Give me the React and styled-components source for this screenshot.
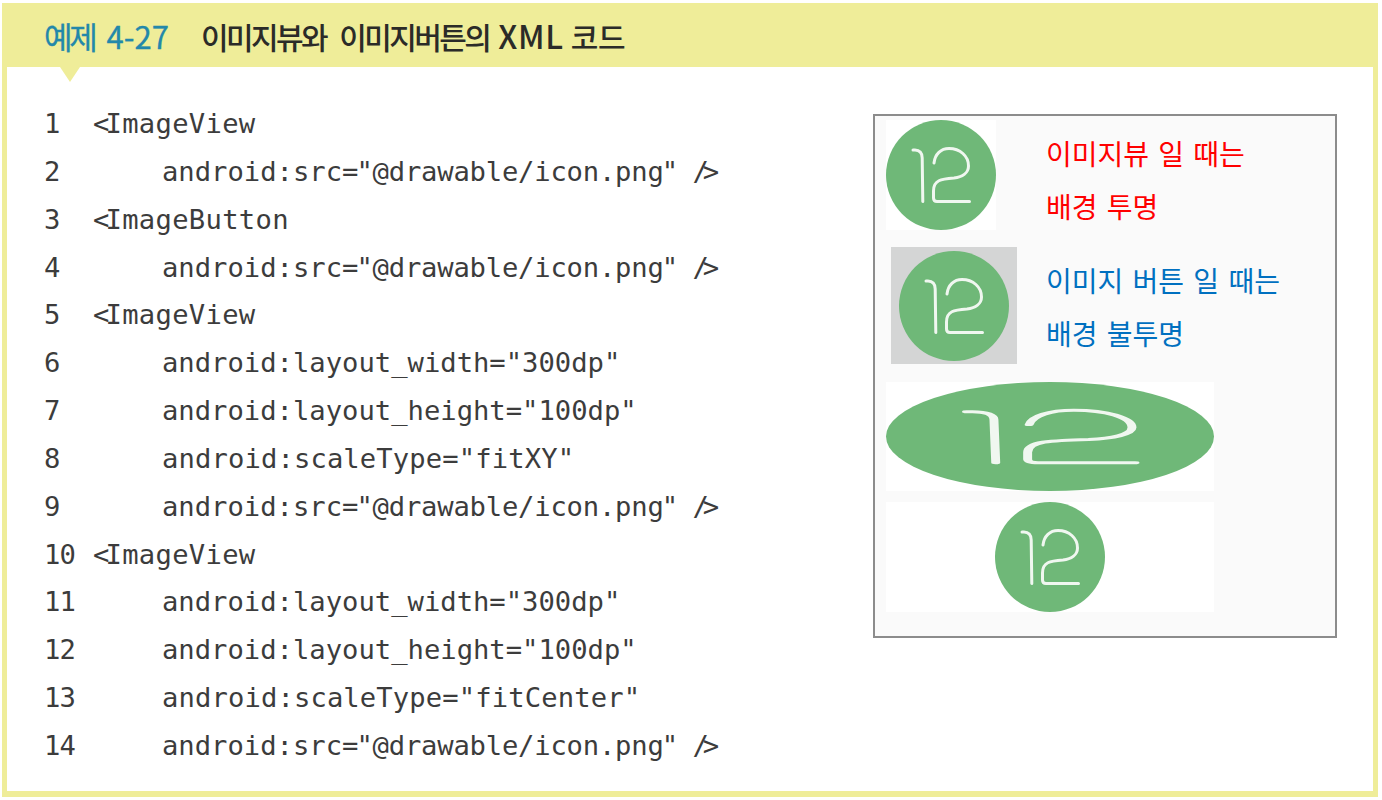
import React from 'react';
import styled, { createGlobalStyle } from 'styled-components';

const GlobalStyle = createGlobalStyle`
  html, body {
    margin: 0;
    padding: 0;
    background: #ffffff;
  }
`;

const Page = styled.div`
  width: 1382px;
  height: 800px;
  padding: 3px 4px 3px 2px;
  box-sizing: border-box;
  overflow: hidden;
`;

const Frame = styled.div`
  height: 100%;
  box-sizing: border-box;
  border: 5px solid #efed99;
  border-top: none;
  border-bottom-width: 6px;
  display: flex;
  flex-direction: column;
`;

const Header = styled.div`
  position: relative;
  height: 64px;
  flex: none;
  margin: 0 -5px;
  padding-left: 42px;
  display: flex;
  align-items: center;
  background: #efed99;

  &::after {
    content: '';
    position: absolute;
    left: 58px;
    top: 64px;
    border-left: 10px solid transparent;
    border-right: 10px solid transparent;
    border-top: 15px solid #efed99;
  }
`;

const ExampleNo = styled.span`
  width: 157px;
  font: 400 31px/1 'Noto Sans CJK KR', sans-serif;
  color: #2388aa;
  -webkit-text-stroke: 0.3px #2388aa;
`;

const ExampleWord = styled.span`
  letter-spacing: -3.2px;
  margin-right: 5px;
`;

const Title = styled.span`
  font: 500 30px/1 'Noto Sans CJK KR', sans-serif;
  letter-spacing: -2.6px;
  word-spacing: 9px;
  color: #2b2b28;
`;

const TitleLatin = styled.span`
  margin: 0 -6px 0 -4px;
  font-size: 32px;
  letter-spacing: 0.6px;
`;

const TitleTail = styled.span`
  letter-spacing: -0.4px;
`;

const Body = styled.div`
  flex: 1;
  display: flex;
  justify-content: space-between;
  padding: 33px 36px 0 37px;
`;

const CodeList = styled.ol`
  list-style: none;
  margin: 0;
  padding: 0;
  font: 400 27.2px/47.85px 'DejaVu Sans Mono', monospace;
  color: #3c3c3c;
`;

const CodeLine = styled.li`
  display: flex;
  white-space: pre;
`;

const LineNo = styled.span`
  width: 49px;
  flex: none;
  letter-spacing: -0.8px;
`;

const Code = styled.span`
  padding-left: ${(p) => (p.$indent ? '69px' : '0')};
  letter-spacing: ${(p) => p.$track || 0}px;
`;

const OpenBracket = styled.span`
  letter-spacing: -3.9px;
`;

const SrcValue = styled.span`
  margin-left: -2px;
  margin-right: -2px;
  letter-spacing: -0.2px;
`;

const CloseTag = styled.span`
  margin-left: 4px;
  letter-spacing: -6px;
`;

const Preview = styled.div`
  width: 464px;
  height: 524px;
  flex: none;
  margin-top: 14px;
  box-sizing: border-box;
  border: 2px solid #8c8c8c;
  background: #fafafa;
  padding: 4px 0 0 11px;
  display: flex;
  flex-direction: column;
`;

const DemoRow = styled.div`
  display: flex;
  align-items: flex-start;
`;

const FirstRow = styled(DemoRow)`
  height: 127px;
`;

const SecondRow = styled(DemoRow)`
  height: 135px;
  padding-left: 5px;
`;

const IconBox = styled.div`
  width: ${(p) => p.$w}px;
  height: ${(p) => p.$h}px;
  flex: none;
  display: flex;
  align-items: center;
  justify-content: center;
  background: ${(p) => p.$bg};
`;

const Stack = styled.div`
  display: flex;
  flex-direction: column;
  gap: 11px;
`;

const NoteBlock = styled.div`
  font: 400 28px/53px 'Noto Sans CJK KR', sans-serif;
  word-spacing: 3px;
  color: ${(p) => p.$color};
  margin-left: ${(p) => p.$left}px;
  margin-top: ${(p) => p.$top}px;
`;

const Android12 = ({ width = 110, height = 110 }) => (
  <svg width={width} height={height} viewBox="0 0 110 110" preserveAspectRatio="none">
    <circle cx="55" cy="55" r="55" fill="#6fb878" />
    <g fill="none" stroke="#f0f7f0" strokeWidth="3" strokeLinecap="round" strokeLinejoin="round">
      <path d="M27 30 H29 C33.5 30 36.2 33 36.2 38 L36.8 81.5" />
      <path d="M48 43 C49 34 55 28.5 63 28.5 C74 28.5 82.5 36 82.5 46 C82.5 53 76 57 68 58 C55 59 47.5 60 47.5 71 L47.5 78 Q47.5 81.5 51 81.5 L83.5 81.5" />
    </g>
  </svg>
);

const WIDTH = 'android:layout_width="300dp"';
const HEIGHT = 'android:layout_height="100dp"';

const lines = [
  { tag: 'ImageView' },
  { src: true },
  { tag: 'ImageButton' },
  { src: true },
  { tag: 'ImageView' },
  { attr: WIDTH },
  { attr: HEIGHT },
  { attr: 'android:scaleType="fitXY"', track: 0.12 },
  { src: true },
  { tag: 'ImageView' },
  { attr: WIDTH },
  { attr: HEIGHT },
  { attr: 'android:scaleType="fitCenter"', track: 0.12 },
  { src: true },
];

const renderCode = (line) => {
  if (line.tag) {
    return (
      <Code $track={0.3}>
        <OpenBracket>{'<'}</OpenBracket>
        {line.tag}
      </Code>
    );
  }
  if (line.src) {
    return (
      <Code $indent>
        android:src=
        <SrcValue>"@drawable/icon.png</SrcValue>"
        <CloseTag> {'/>'}</CloseTag>
      </Code>
    );
  }
  return (
    <Code $indent $track={line.track}>
      {line.attr}
    </Code>
  );
};

export default function App() {
  return (
    <Page>
      <GlobalStyle />
      <Frame>
        <Header>
          <ExampleNo>
            <ExampleWord>예제</ExampleWord> 4-27
          </ExampleNo>
          <Title>
            이미지뷰와 이미지버튼의 <TitleLatin>XML</TitleLatin> <TitleTail>코드</TitleTail>
          </Title>
        </Header>
        <Body>
          <CodeList>
            {lines.map((line, i) => (
              <CodeLine key={i}>
                <LineNo>{i + 1}</LineNo>
                {renderCode(line)}
              </CodeLine>
            ))}
          </CodeList>
          <Preview>
            <FirstRow>
              <IconBox $w={110} $h={110} $bg="#ffffff">
                <Android12 />
              </IconBox>
              <NoteBlock $color="#ff0000" $left={50} $top={7}>
                이미지뷰 일 때는
                <br />
                배경 투명
              </NoteBlock>
            </FirstRow>
            <SecondRow>
              <IconBox $w={126} $h={117} $bg="#d4d5d5">
                <Android12 />
              </IconBox>
              <NoteBlock $color="#0070c0" $left={29} $top={7}>
                이미지 버튼 일 때는
                <br />
                배경 불투명
              </NoteBlock>
            </SecondRow>
            <Stack>
              <IconBox $w={328} $h={109} $bg="#ffffff">
                <Android12 width={328} height={109} />
              </IconBox>
              <IconBox $w={328} $h={110} $bg="#ffffff">
                <Android12 />
              </IconBox>
            </Stack>
          </Preview>
        </Body>
      </Frame>
    </Page>
  );
}
